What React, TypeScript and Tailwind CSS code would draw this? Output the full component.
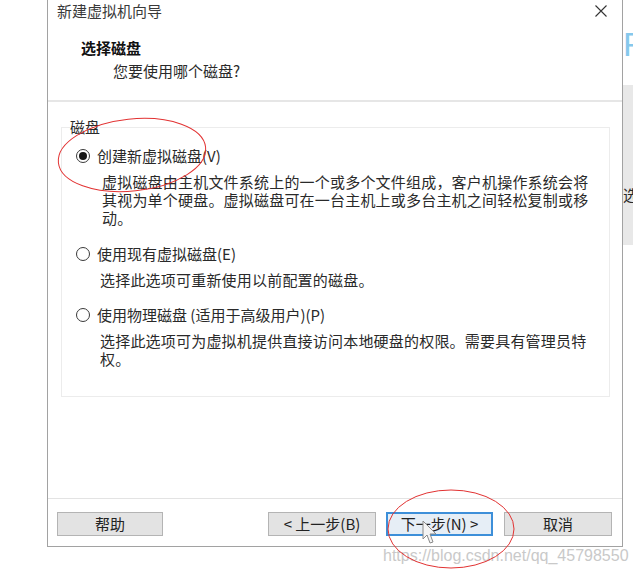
const cjk = "font-['Noto_Sans_CJK_SC','Noto_Sans',sans-serif]";

function Radio({ checked }: { checked?: boolean }) {
  return (
    <span className="flex h-[14px] w-[14px] shrink-0 items-center justify-center rounded-full border border-[#3a3a3a] bg-white">
      {checked && <span className="h-[8px] w-[8px] rounded-full bg-[#161616]" />}
    </span>
  );
}

function Option({
  label,
  lines,
  checked,
  descPad = "pl-[40px]",
  className = "",
}: {
  label: string;
  lines: string[];
  checked?: boolean;
  descPad?: string;
  className?: string;
}) {
  return (
    <div className={className}>
      <div className="flex h-5 items-center gap-[7px] pl-[14px]">
        <Radio checked={checked} />
        <span className="whitespace-nowrap text-[15px] leading-5">{label}</span>
      </div>
      <div className={`mt-[7px] ${descPad}`}>
        {lines.map((l) => (
          <div key={l} className="whitespace-nowrap text-[15px] leading-[18px] tracking-[0.2px]">
            {l}
          </div>
        ))}
      </div>
    </div>
  );
}

function Button({ children, primary, className = "" }: { children: React.ReactNode; primary?: boolean; className?: string }) {
  return (
    <button
      className={`flex h-[24px] items-center justify-center text-[15px] text-[#222] ${
        primary ? "border-2 border-[#3d8fd9] bg-[#e6eef6]" : "border border-[#b4b4b4] bg-[#e3e3e3]"
      } ${className}`}
    >
      {children}
    </button>
  );
}

export default function App() {
  return (
    <div className={`relative h-[569px] w-[633px] overflow-hidden bg-white text-[#2a2a2a] ${cjk}`}>
      <div className="flex h-[547px]">
        <div className="w-[47px] shrink-0" />

        {/* wizard window */}
        <div className="flex w-[576px] shrink-0 flex-col border-x border-b border-[#a2a2a2] bg-white">
          <div className="flex h-[22px] shrink-0 items-center justify-between pl-[9px] pr-[15px]">
            <span className="text-[15px] leading-5 text-[#3a3a3a]">新建虚拟机向导</span>
            <svg width="12" height="12" viewBox="0 0 12 12" className="text-[#333]">
              <path d="M0.5 0.5 L11.5 11.5 M11.5 0.5 L0.5 11.5" stroke="currentColor" strokeWidth="1.1" />
            </svg>
          </div>

          <div className="h-[80px] shrink-0 border-b-2 border-[#e6e6e6] pt-[16px]">
            <div className="pl-[33px] text-[15px] font-bold leading-5 text-[#111]">选择磁盘</div>
            <div className="mt-[3px] pl-[65px] text-[15px] leading-5">您要使用哪个磁盘?</div>
          </div>

          <div className="flex-1 px-[13px] pr-[12px]">
            <fieldset className="mt-[15px] border border-[#ececec] pb-[28px]">
              <legend className="ml-[8px] text-[15px] leading-5">磁盘</legend>
              <Option
                className="mt-[9px]"
                checked
                label="创建新虚拟磁盘(V)"
                lines={[
                  "虚拟磁盘由主机文件系统上的一个或多个文件组成，客户机操作系统会将",
                  "其视为单个硬盘。虚拟磁盘可在一台主机上或多台主机之间轻松复制或移",
                  "动。",
                ]}
              />
              <Option
                className="mt-[17px]"
                descPad="pl-[38px]"
                label="使用现有虚拟磁盘(E)"
                lines={["选择此选项可重新使用以前配置的磁盘。"]}
              />
              <Option
                className="mt-[16px]"
                descPad="pl-[38px]"
                label="使用物理磁盘 (适用于高级用户)(P)"
                lines={["选择此选项可为虚拟机提供直接访问本地硬盘的权限。需要具有管理员特", "权。"]}
              />
            </fieldset>
          </div>

          <div className="flex shrink-0 items-center border-t border-[#e3e3e3] pb-[10px] pl-[9px] pr-[10px] pt-[13px]">
            <Button className="w-[106px]">帮助</Button>
            <div className="flex-1" />
            <div className="flex gap-[10px]">
              <Button className="w-[108px]">&lt; 上一步(B)</Button>
              <Button primary className="w-[107px]">下一步(N) &gt;</Button>
              <Button className="ml-px w-[108px]">取消</Button>
            </div>
          </div>
        </div>

        {/* edge of the window behind */}
        <div className="flex w-[10px] shrink-0 flex-col overflow-hidden">
          <div className="mt-[29px] h-[30px] whitespace-nowrap text-[34px] font-light leading-[30px] text-[#86c8ec] font-['Liberation_Sans',sans-serif]">
            R
          </div>
          <div className="mt-[26px] h-[160px] bg-[#e8e8e8] pt-[100px] text-[15px] leading-5 whitespace-nowrap">选</div>
        </div>
      </div>

      <div className="pl-[383px] whitespace-nowrap font-['Liberation_Sans',sans-serif] text-[16px] leading-[18px] text-[#c9c9c9]">
        https://blog.csdn.net/qq_45798550
      </div>

      {/* annotations drawn on the screenshot */}
      <svg className="pointer-events-none absolute inset-0" width="633" height="569">
        <ellipse cx="132" cy="155" rx="74" ry="36" transform="rotate(-6 132 155)" fill="none" stroke="#e23232" strokeWidth="1" />
        <ellipse cx="451" cy="529" rx="63" ry="39" fill="none" stroke="#e23232" strokeWidth="1" />
        <path
          d="M423 521 L423 539 L427 535 L430 543 L433 542 L430 534 L436 534 Z"
          fill="#f4f4f4"
          stroke="#8a8a8a"
          strokeWidth="1"
          strokeLinejoin="round"
        />
      </svg>
    </div>
  );
}
